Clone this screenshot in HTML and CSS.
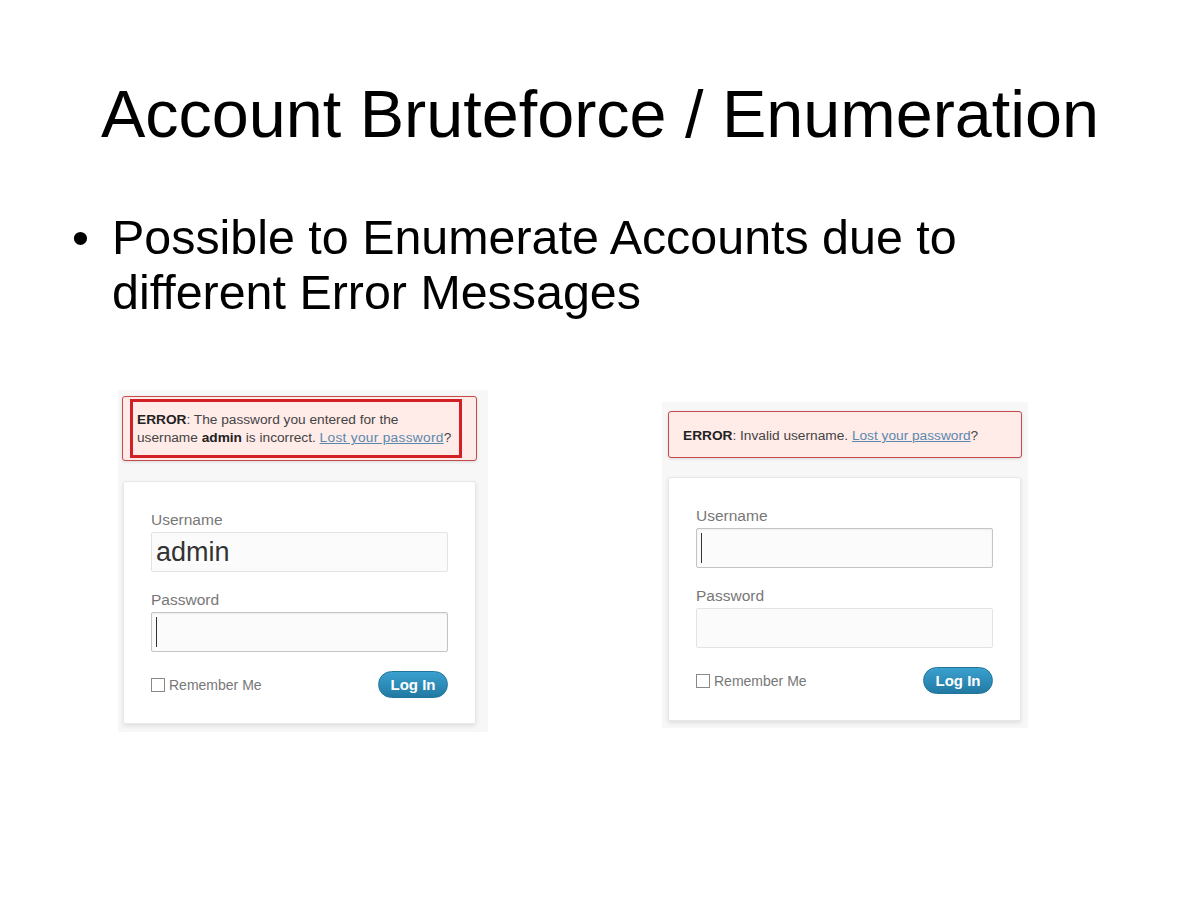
FILE: index.html
```html
<!DOCTYPE html>
<html lang="en">
<head>
  <meta charset="UTF-8">
  <title>Account Bruteforce / Enumeration</title>
  <link rel="stylesheet" href="styles.css">
</head>
<body>
  <!-- SLIDE TITLE -->
  <h1 class="title">Account Bruteforce / Enumeration</h1>

  <ul class="points">
    <li>Possible to Enumerate Accounts due to different Error Messages</li>
  </ul>

  <!-- SCREENSHOTS -->
  <div class="shots">
    <div class="shot shot-left">
      <div class="error error-tall">
        <strong>ERROR</strong>: The password you entered for the<br>
        username <strong>admin</strong> is incorrect. <a href="#">Lost your password</a>?
        <span class="highlight"></span>
      </div>
      <div class="card">
        <label class="field-label">Username</label>
        <div class="field filled">admin</div>
        <label class="field-label">Password</label>
        <div class="field focused"><span class="caret"></span></div>
        <div class="card-foot">
          <span class="remember"><span class="check"></span>Remember Me</span>
          <button class="login" type="button">Log In</button>
        </div>
      </div>
    </div>

    <div class="shot shot-right">
      <div class="error error-short">
        <strong>ERROR</strong>: Invalid username. <a href="#">Lost your password</a>?
      </div>
      <div class="card">
        <label class="field-label">Username</label>
        <div class="field focused"><span class="caret"></span></div>
        <label class="field-label">Password</label>
        <div class="field"></div>
        <div class="card-foot">
          <span class="remember"><span class="check"></span>Remember Me</span>
          <button class="login" type="button">Log In</button>
        </div>
      </div>
    </div>
  </div>
</body>
</html>
```

FILE: styles.css
```css
body {
  margin: 0;
  font-family: "Liberation Sans", Arial, sans-serif;
  background-color: #fff;
  color: #000;
  width: 1200px;
  height: 899px;
  overflow: hidden;
}

.title {
  margin: 77px 0 0;
  font-size: 66.5px;
  font-weight: normal;
  line-height: 74px;
  text-align: center;
}

.points {
  margin: 59px 0 0;
  padding: 0 0 0 112px;
  list-style: none;
  font-size: 48.4px;
  line-height: 55px;
  width: 900px;
}

.points li {
  position: relative;
}

.points li:before {
  content: "\2022";
  position: absolute;
  left: -40px;
}

/* screenshots row */
.shots {
  display: flex;
  align-items: flex-start;
  margin: 70px 0 0 118px;
  gap: 174px;
}

.shot {
  background-color: #f7f7f7;
  display: flex;
  flex-direction: column;
}

.shot-left {
  width: 370px;
  height: 342px;
  padding: 6px 0 0 4px;
  box-sizing: border-box;
}

.shot-right {
  width: 366px;
  height: 326px;
  margin-top: 12px;
  padding: 9px 0 0 6px;
  box-sizing: border-box;
}

.error {
  position: relative;
  box-sizing: border-box;
  background-color: #ffebe8;
  border: 1px solid #c64a4a;
  border-radius: 3px;
  box-shadow: 0 1px 3px rgba(0,0,0,0.12);
  color: #444;
  line-height: 18px;
}

.error strong {
  color: #222;
}

.error a {
  color: #5a88ad;
}

.error-tall {
  width: 355px;
  height: 65px;
  padding: 14px 0 0 14px;
  font-size: 13.7px;
}

.error-tall a {
  letter-spacing: 0.3px;
}

.error-short {
  width: 354px;
  height: 47px;
  padding: 15px 0 0 14px;
  font-size: 13.7px;
}

/* red annotation frame */
.highlight {
  position: absolute;
  left: 7px;
  top: 2px;
  width: 332px;
  height: 59px;
  box-sizing: border-box;
  border: 3px solid #d31f26;
}

.card {
  box-sizing: border-box;
  width: 353px;
  height: 244px;
  margin-top: 19px;
  padding: 29px 27px 0;
  background-color: #fff;
  border: 1px solid #e8e8e8;
  border-radius: 2px;
  box-shadow: 0 2px 4px rgba(0,0,0,0.1);
  display: flex;
  flex-direction: column;
}

.shot-left .card {
  margin-left: 1px;
  margin-top: 20px;
  height: 243px;
}

.field-label {
  font-size: 15.5px;
  line-height: 17px;
  color: #777;
}

.field {
  box-sizing: border-box;
  height: 40px;
  margin: 4px 0 19px;
  background-color: #fbfbfb;
  border: 1px solid #e3e3e3;
  border-radius: 2px;
  display: flex;
  align-items: center;
  padding-left: 4px;
}

.field.focused {
  border-color: #c4c4c4;
  box-shadow: inset 0 1px 2px rgba(0,0,0,0.06);
}

.field.filled {
  font-size: 27px;
  color: #333;
}

.caret {
  display: block;
  width: 1px;
  height: 30px;
  background-color: #333;
}

.card-foot {
  display: flex;
  justify-content: space-between;
  align-items: center;
}

.remember {
  display: flex;
  align-items: center;
  gap: 4px;
  color: #777;
  font-size: 14px;
}

.check {
  width: 12px;
  height: 12px;
  border: 1px solid #888;
  background-color: #fff;
}

.login {
  width: 70px;
  height: 27px;
  border: 1px solid #21759b;
  border-radius: 14px;
  background: linear-gradient(#3aa0cf, #227aa3);
  color: #fff;
  font-family: "Liberation Sans", Arial, sans-serif;
  font-size: 15px;
  font-weight: bold;
  padding: 0;
}
```
